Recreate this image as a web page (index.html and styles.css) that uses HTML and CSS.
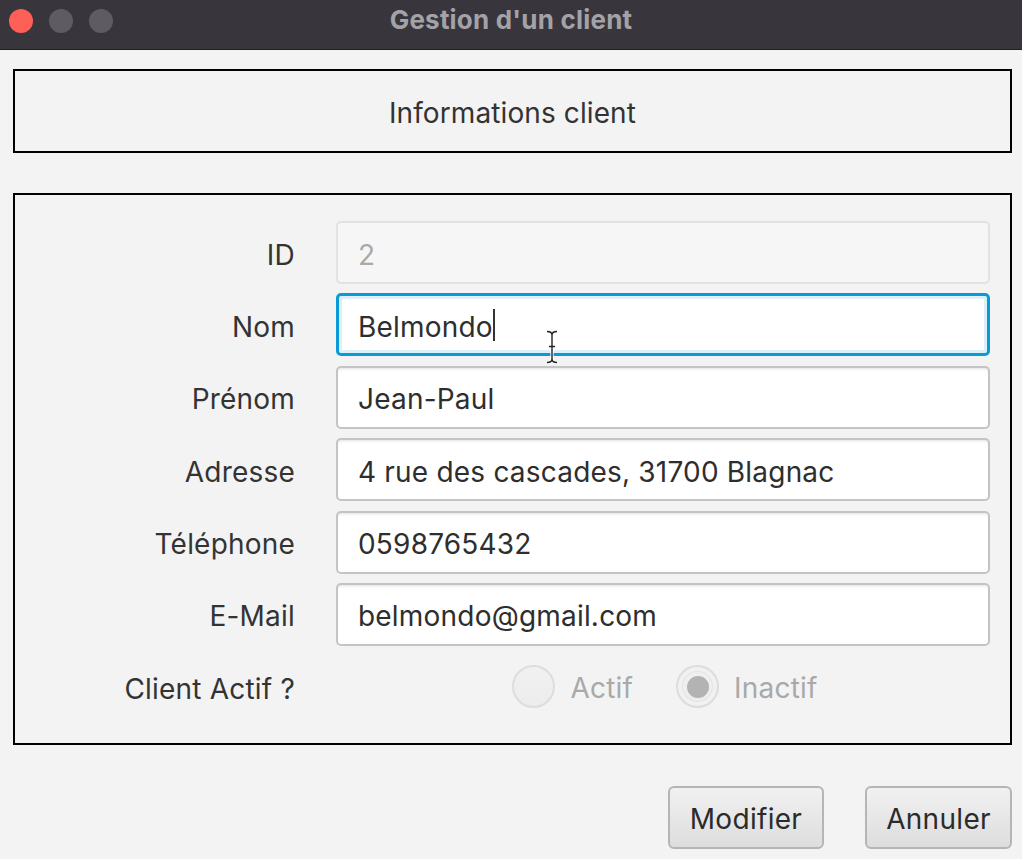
FILE: index.html
```html
<!DOCTYPE html>
<html lang="fr">
<head>
<meta charset="utf-8">
<title>Gestion d'un client</title>
<link rel="stylesheet" href="styles.css">
</head>
<body>
<div class="titlebar">
  <div class="lights">
    <span class="light red"></span>
    <span class="light gray"></span>
    <span class="light gray"></span>
  </div>
  <div class="title">Gestion d'un client</div>
</div>
<main class="content">
  <section class="header-box">Informations client</section>
  <section class="form-box">
    <div class="form-grid">
      <label class="lbl">ID</label>
      <div class="field disabled">2</div>
      <label class="lbl">Nom</label>
      <div class="field focused">Belmondo<span class="caret"></span>
        <svg class="ibeam" width="14" height="34" viewBox="0 0 14 34"><path d="M2 1.5 Q7 1.5 7 5 Q7 1.5 12 1.5 M7 5 V29 M4 16.5 H10 M2 32.5 Q7 32.5 7 29 Q7 32.5 12 32.5" fill="none" stroke="#fff" stroke-width="3.2"/><path d="M2 1.5 Q7 1.5 7 5 Q7 1.5 12 1.5 M7 5 V29 M4 16.5 H10 M2 32.5 Q7 32.5 7 29 Q7 32.5 12 32.5" fill="none" stroke="#222" stroke-width="1.4"/></svg>
      </div>
      <label class="lbl">Prénom</label>
      <div class="field">Jean-Paul</div>
      <label class="lbl">Adresse</label>
      <div class="field">4 rue des cascades, 31700 Blagnac</div>
      <label class="lbl">Téléphone</label>
      <div class="field">0598765432</div>
      <label class="lbl">E-Mail</label>
      <div class="field">belmondo@gmail.com</div>
      <label class="lbl">Client Actif ?</label>
      <div class="radios">
        <span class="radio-item"><span class="radio"></span><span class="radio-text">Actif</span></span>
        <span class="radio-item"><span class="radio checked"><span class="dot"></span></span><span class="radio-text">Inactif</span></span>
      </div>
    </div>
  </section>
  <div class="actions">
    <button class="btn btn-modifier">Modifier</button>
    <button class="btn btn-annuler">Annuler</button>
  </div>
</main>
</body>
</html>
```
FILE: styles.css
```css
* { box-sizing: border-box; }
html, body { margin: 0; padding: 0; }
body {
  width: 1022px;
  height: 859px;
  overflow: hidden;
  background: #f3f3f3;
  font-family: Inter, "Liberation Sans", Arial, sans-serif;
  color: #333333;
}
.titlebar {
  height: 50px;
  background: #38363c;
  border-bottom: 1px solid #1f1e22;
  display: flex;
  align-items: center;
  justify-content: center;
  position: relative;
}
.lights {
  position: absolute;
  left: 9px;
  top: 9px;
  display: flex;
  gap: 16px;
}
.light {
  width: 24px;
  height: 24px;
  border-radius: 50%;
  display: block;
}
.light.red { background: #fe5f57; }
.light.gray { background: #5e5c62; }
.title {
  font-weight: bold;
  font-size: 26px;
  letter-spacing: 0.2px;
  color: #a3a2a7;
  margin-top: -10px;
}
.content {
  padding: 19px 10px 0 13px;
}
.header-box {
  height: 84px;
  border: 2px solid #000;
  display: flex;
  align-items: center;
  justify-content: center;
  padding-top: 3px;
  font-size: 28px;
  letter-spacing: 0.1px;
  color: #333;
}
.form-box {
  margin-top: 40px;
  height: 552px;
  border: 2px solid #000;
  padding: 26px 20px 0 0;
}
.form-grid {
  display: grid;
  grid-template-columns: 280px 1fr;
  column-gap: 41px;
  row-gap: 9.4px;
  grid-auto-rows: 63px;
}
.lbl {
  display: flex;
  align-items: center;
  justify-content: flex-end;
  padding-top: 4px;
  font-size: 28px;
  letter-spacing: 0.2px;
  color: #333;
}
.field {
  position: relative;
  display: flex;
  align-items: center;
  padding-left: 20px;
  padding-top: 4px;
  font-size: 28px;
  letter-spacing: 0.2px;
  color: #2e2e2e;
  background: #ffffff;
  border: 2px solid #c4c4c4;
  border-radius: 5px;
  box-shadow: inset 0 3px 3px -2px rgba(0,0,0,0.12);
}
.field.disabled {
  background: #f6f6f6;
  border-color: #e2e2e2;
  color: #a9a9a9;
  box-shadow: none;
}
.field.focused {
  border: 3px solid #0a9bd6;
  padding-left: 19px;
  box-shadow: inset 0 0 0 3px #dbf0f9;
}
.caret {
  display: inline-block;
  width: 2px;
  height: 32px;
  background: #333;
  margin-left: 0;
  margin-top: -4px;
}
.ibeam {
  position: absolute;
  left: 206px;
  top: 34px;
}
.radios {
  display: flex;
  align-items: center;
  justify-content: center;
  gap: 43px;
  padding-left: 4px;
}
.radio-item {
  display: flex;
  align-items: center;
  gap: 15px;
}
.radio {
  width: 43px;
  height: 43px;
  border-radius: 50%;
  border: 2px solid #dddddd;
  background: linear-gradient(#f1f1f1, #ececec);
  display: flex;
  align-items: center;
  justify-content: center;
}
.radio.checked {
  box-shadow: inset 0 0 0 4px #f1f1f1, inset 0 0 0 5px #e4e4e4;
}
.dot {
  width: 22px;
  height: 22px;
  border-radius: 50%;
  background: #b3b3b3;
}
.radio-text {
  font-size: 28px;
  letter-spacing: 0.2px;
  color: #a9a9a9;
  padding-top: 3px;
}
.actions {
  display: flex;
  justify-content: flex-end;
  gap: 41px;
  margin-top: 41px;
}
.btn {
  height: 63px;
  font-family: Inter, "Liberation Sans", Arial, sans-serif;
  font-size: 28px;
  letter-spacing: 0.3px;
  color: #2b2b2b;
  background: linear-gradient(#f1f1f1, #dddddd);
  border: 2px solid #b5b5b5;
  border-radius: 6px;
  padding: 3px 0 0;
}
.btn-modifier { width: 156px; }
.btn-annuler { width: 147px; }
```
